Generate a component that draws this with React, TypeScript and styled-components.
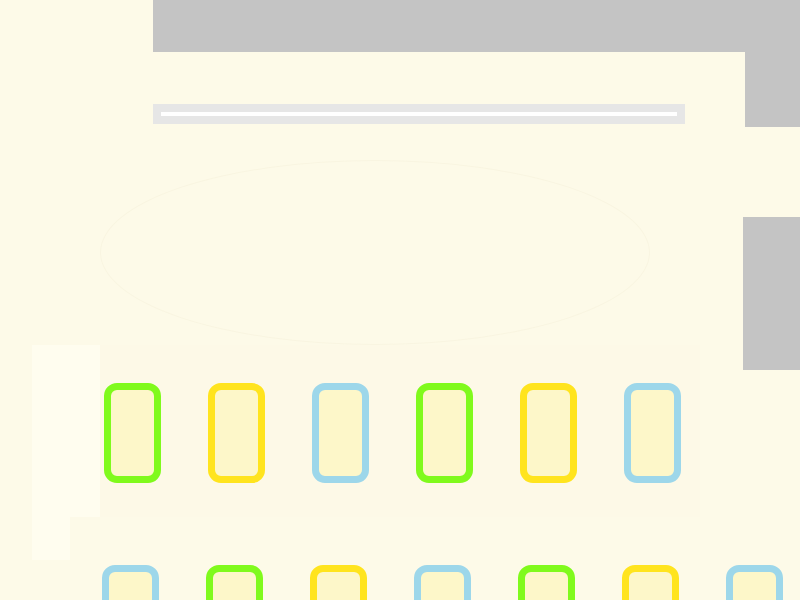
import React from 'react'
import styled, { createGlobalStyle } from 'styled-components'

const GlobalStyle = createGlobalStyle`
    html, body {
        margin: 0;
        padding: 0;
        background: #fdfae8;
        font-family: 'Liberation Sans', Arial, sans-serif;
        overflow: hidden;
    }
`

const Page = styled.div`
    width: 800px;
    height: 600px;
    background: #fdfae8;
    display: flex;
    flex-direction: column;
    overflow: hidden;
`

const Header = styled.div`
    display: grid;
    grid-template-columns: 153px 592px 55px;
    grid-template-rows: 52px 75px;
    flex: none;
`

const Banner = styled.div`
    grid-column: 2 / 4;
    grid-row: 1;
    background: #c4c4c4;
`

const SideTab = styled.div`
    grid-column: 3;
    grid-row: 2;
    background: #c4c4c4;
`

const SearchCell = styled.div`
    grid-column: 2;
    grid-row: 2;
    padding-top: 52px;
`

const SearchBar = styled.div`
    width: 532px;
    height: 20px;
    box-sizing: border-box;
    background: #e6e6e6;
    padding: 8px;
`

const SearchTrack = styled.div`
    height: 4px;
    background: #ffffff;
`

const Body = styled.div`
    display: grid;
    grid-template-columns: 32px 68px 643px 57px;
    grid-template-rows: 218px 172px 83px;
    flex: none;
`

const Halo = styled.div`
    grid-column: 3;
    grid-row: 1;
    margin-top: 33px;
    width: 550px;
    height: 185px;
    border-radius: 50%;
    border: 1px solid #f9f5e1;
    box-sizing: border-box;
`

const SideBlock = styled.div`
    grid-column: 4;
    grid-row: 1 / 3;
    margin-top: 90px;
    height: 153px;
    background: #c4c4c4;
`

const Gutter = styled.div<{ short?: boolean }>`
    grid-column: 2;
    background: #fffdef;
    width: ${(p) => (p.short ? '38px' : 'auto')};
    height: ${(p) => (p.short ? '43px' : 'auto')};
`

const Row = styled.div<{ wide?: boolean; top: number }>`
    grid-column: ${(p) => (p.wide ? '3 / 5' : '3')};
    display: flex;
    align-items: flex-start;
    gap: 47px;
    padding: ${(p) => p.top}px 0 0 ${(p) => (p.wide ? 2 : 4)}px;
    margin-right: ${(p) => (p.wide ? 0 : 43)}px;
    background: ${(p) => (p.wide ? 'transparent' : '#fdf9e7')};
    overflow: hidden;
`

const colors = {
    green: '#80fa1c',
    yellow: '#ffe41e',
    blue: '#9dd7ea',
}

type Tone = keyof typeof colors

const Cell = styled.div<{ tone: Tone }>`
    flex: none;
    width: 57px;
    height: 100px;
    box-sizing: border-box;
    border: 7.5px solid ${(p) => colors[p.tone]};
    border-radius: 13px;
    background: #fdf7c9;
`

const firstRow: Tone[] = ['green', 'yellow', 'blue', 'green', 'yellow', 'blue']
const secondRow: Tone[] = ['blue', 'green', 'yellow', 'blue', 'green', 'yellow', 'blue']

const App: React.FC = () => {
    return (
        <Page>
            <GlobalStyle />
            <Header>
                <Banner />
                <SearchCell>
                    <SearchBar>
                        <SearchTrack />
                    </SearchBar>
                </SearchCell>
                <SideTab />
            </Header>
            <Body>
                <Halo />
                <SideBlock />
                <Gutter style={{ gridRow: 2 }} />
                <Row top={38} style={{ gridRow: 2 }}>
                    {firstRow.map((t, i) => (
                        <Cell key={i} tone={t} />
                    ))}
                </Row>
                <Gutter short style={{ gridRow: 3 }} />
                <Row wide top={48} style={{ gridRow: 3 }}>
                    {secondRow.map((t, i) => (
                        <Cell key={i} tone={t} />
                    ))}
                </Row>
            </Body>
        </Page>
    )
}

export default App
